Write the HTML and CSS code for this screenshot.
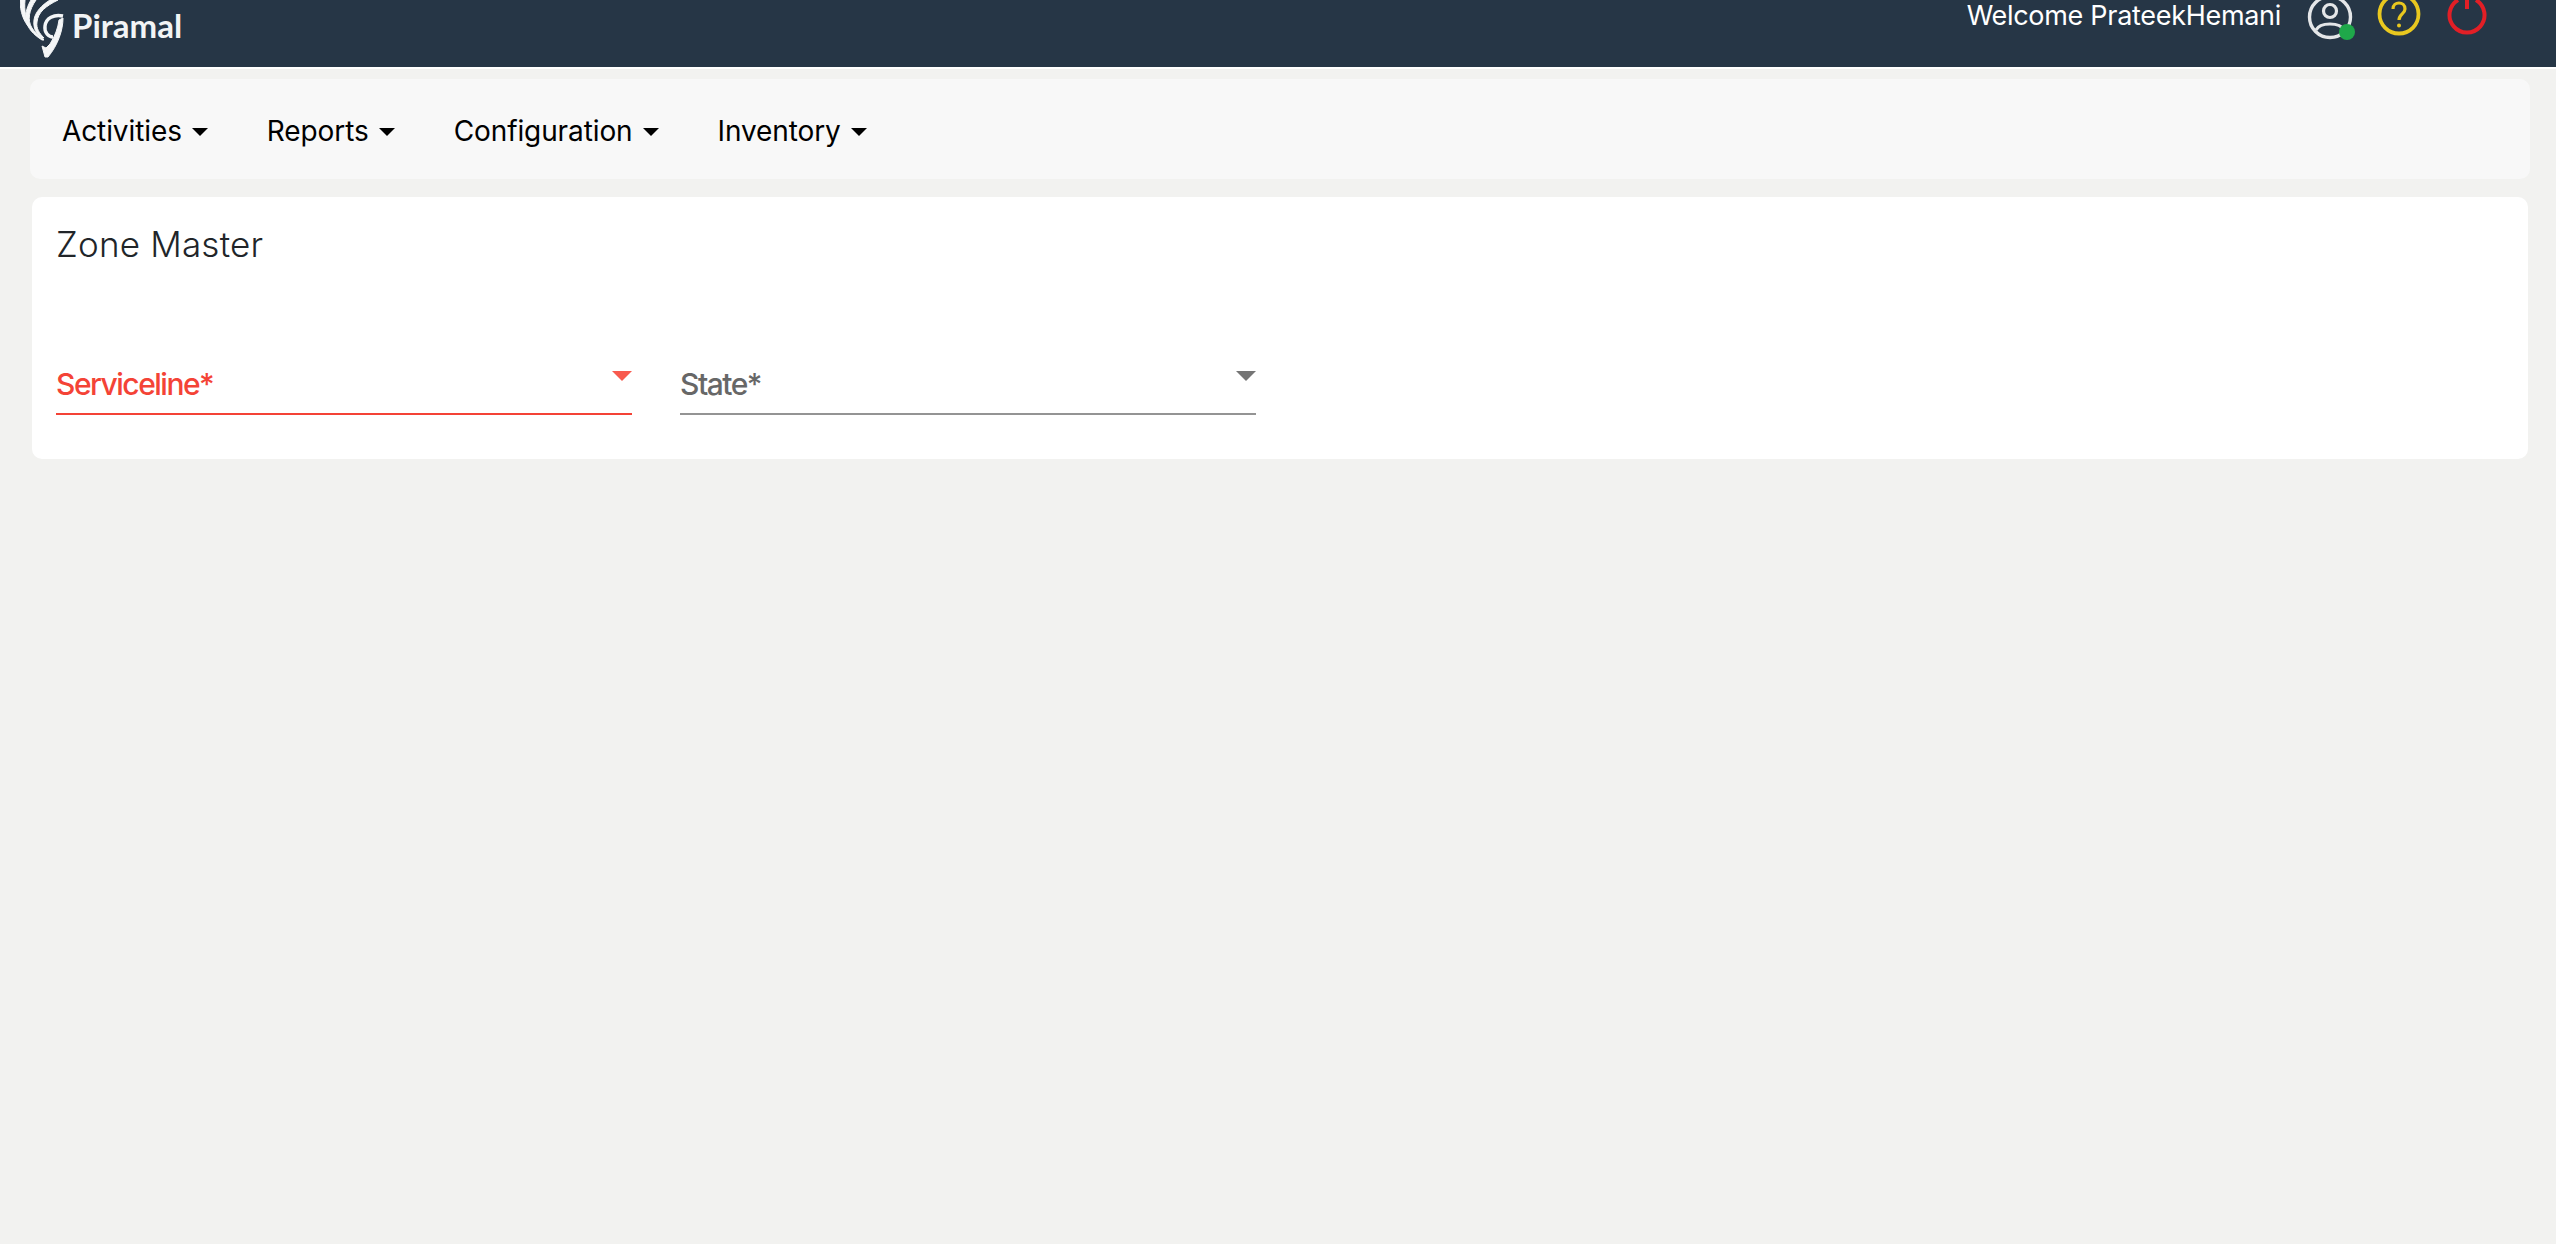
FILE: index.html
```html
<!DOCTYPE html>
<html lang="en">
<head>
<meta charset="utf-8">
<title>Zone Master</title>
<link rel="stylesheet" href="styles.css">
</head>
<body>
<header class="topbar">
  <div class="brand">
    <svg class="brand-mark" viewBox="0 0 44 58" aria-hidden="true">
      <path class="brand-stripe" d="M0 0 H5 C4 10 6 20 9 27 C4 22 0 12 0 0 Z"/>
      <path class="brand-stripe" d="M11 0 H16 C9 10 7 20 12 28 C16 34 21 37 24 40 L22 40 C14 35 7 28 6 20 C5 12 8 5 11 0 Z"/>
      <path class="brand-stripe" d="M30 0 H38 C26 6 18 12 17 22 C16 28 19 33 24 38 L22 38 C16 34 13 28 14 20 C15 12 22 5 30 0 Z"/>
      <path d="M43 16 C34 14 26 18 25 26 C24 33 29 37 33 37" fill="none" stroke="#f4f6f7" stroke-width="3.4"/>
      <path class="brand-stripe" d="M43 18 C43 30 38 45 28 57 L25 57 L22 46 L26 48 L30 44 C35 36 38 28 39 20 Z"/>
    </svg>
    <span class="brand-name">Piramal</span>
  </div>
  <div class="userbar">
    <span class="welcome">Welcome PrateekHemani</span>
    <span class="icon-user">
      <svg class="icon" viewBox="0 0 46 46" aria-hidden="true">
        <circle cx="23" cy="23" r="20.5" fill="none" stroke="#e4e6e8" stroke-width="3.4"/>
        <circle cx="23" cy="17" r="6.5" fill="none" stroke="#e4e6e8" stroke-width="3.2"/>
        <path d="M9 36 C13 28 33 28 37 36" fill="none" stroke="#e4e6e8" stroke-width="3.2"/>
      </svg>
      <span class="presence"></span>
    </span>
    <svg class="icon icon-help" viewBox="0 0 44 44" aria-hidden="true">
      <circle cx="22" cy="22" r="19.5" fill="none" stroke="#e9c81f" stroke-width="3.8"/>
      <path d="M16 17 C16 9 28 9 28 17 C28 22 22 22 22 28" fill="none" stroke="#e9c81f" stroke-width="3.2"/>
      <circle cx="22" cy="33.5" r="2" fill="#e9c81f"/>
    </svg>
    <svg class="icon icon-power" viewBox="0 0 40 42" aria-hidden="true">
      <path d="M11 7 A17.5 17.5 0 1 0 29 7" fill="none" stroke="#e21f26" stroke-width="4"/>
      <path d="M20 0 V16" fill="none" stroke="#e21f26" stroke-width="4"/>
    </svg>
  </div>
</header>

<nav class="menu">
  <span class="menu-item">Activities</span>
  <span class="menu-item">Reports</span>
  <span class="menu-item">Configuration</span>
  <span class="menu-item">Inventory</span>
</nav>

<main class="card">
  <h1 class="card-title">Zone Master</h1>
  <div class="fields">
    <div class="field field-error">
      <span class="field-label">Serviceline*</span>
      <span class="field-arrow"></span>
    </div>
    <div class="field">
      <span class="field-label">State*</span>
      <span class="field-arrow"></span>
    </div>
  </div>
</main>
</body>
</html>
```
FILE: styles.css
```css
* { box-sizing: border-box; }
html, body { margin: 0; height: 100%; }
body {
  background: #f2f2f0;
  font-family: Inter, Roboto, sans-serif;
  overflow: hidden;
}
.topbar {
  height: 69px;
  background: #263646;
  border-bottom: 2px solid #fff;
  display: flex;
  justify-content: space-between;
  overflow: hidden;
}
.brand { display: flex; align-items: flex-start; padding-left: 20px; }
.brand-mark { width: 44px; height: 58px; flex: none; }
.brand-stripe { fill: #f4f6f7; stroke: #f4f6f7; stroke-width: 1; }
.brand-name {
  margin: 3px 0 0 8px;
  font-family: Lato, sans-serif;
  font-weight: 700;
  font-size: 33px;
  line-height: 44px;
  color: #f2f4f5;
}
.userbar { display: flex; align-items: flex-start; padding-right: 69px; }
.welcome { font-size: 27px; line-height: 31px; margin: 0 26px 0 0; color: #fff; letter-spacing: -0.3px; }
.icon { display: block; flex: none; }
.icon-user { position: relative; width: 46px; height: 46px; margin-top: -6px; }
.icon-user .icon { width: 46px; height: 46px; }
.presence {
  position: absolute;
  right: -2px;
  bottom: 0;
  width: 16px;
  height: 16px;
  border-radius: 50%;
  background: #1fa84a;
}
.icon-help { width: 44px; height: 44px; margin: -8px 0 0 24px; }
.icon-power { width: 40px; height: 42px; margin: -7px 0 0 26px; }
.menu {
  margin: 10px 26px 0 30px;
  height: 100px;
  background: #f8f8f8;
  border-radius: 10px;
  display: flex;
  align-items: center;
  padding: 3px 0 0 32px;
  gap: 59px;
}
.menu-item {
  font-size: 28px;
  color: #000;
  display: flex;
  align-items: center;
  letter-spacing: -0.1px;
}
.menu-item::after {
  content: "";
  margin-left: 10px;
  margin-top: 2px;
  border-top: 8px solid #000;
  border-left: 8px solid transparent;
  border-right: 8px solid transparent;
}
.card {
  margin: 18px 28px 0 32px;
  height: 262px;
  background: #fff;
  border-radius: 10px;
  padding: 25px 24px 0;
}
.card-title {
  margin: 0;
  font-size: 35px;
  font-weight: 350;
  line-height: 44px;
  color: #212529;
  letter-spacing: 0.2px;
}
.fields { display: flex; gap: 48px; margin-top: 81px; }
.field {
  position: relative;
  width: 576px;
  height: 68px;
  border-bottom: 2px solid #949494;
  color: #676767;
  display: flex;
  align-items: flex-end;
}
.field-label { font-size: 30px; line-height: 34px; font-weight: 500; padding-bottom: 12px; letter-spacing: -1.5px; }
.field-arrow {
  position: absolute;
  right: 0;
  top: 24px;
  border-top: 10px solid #757575;
  border-left: 10px solid transparent;
  border-right: 10px solid transparent;
}
.field-error { border-bottom-color: #f44336; color: #f44336; }
.field-error .field-arrow { border-top-color: #f85a4e; }
```
